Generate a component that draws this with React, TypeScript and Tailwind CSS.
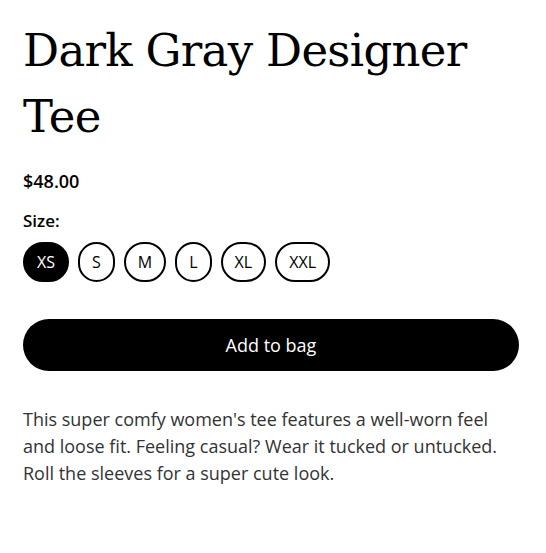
const sizes = ["XS", "S", "M", "L", "XL", "XXL"];

export default function App() {
  const selected = "XS";

  return (
    <div
      className="w-[546px] min-h-[553px] bg-white pl-[23px] pr-[27px] pt-[18px] text-black"
      style={{ fontFamily: '"Open Sans", sans-serif' }}
    >
      <h1 className="font-['DejaVu_Serif',serif] text-[45px] leading-[66px] font-normal tracking-[-0.7px]">
        Dark Gray Designer Tee
      </h1>

      <div className="mt-[19px] text-[18px] leading-[24px] font-semibold">$48.00</div>

      <div className="mt-[16px] text-[17px] leading-[24px] font-semibold">Size:</div>

      {/* Sizes */}
      <div className="mt-[9px] flex gap-[9px]">
        {sizes.map((s) => (
          <button
            key={s}
            className={
              s === selected
                ? "h-[40px] rounded-full border-2 border-black bg-black px-[12px] text-[16px] font-medium text-white"
                : "h-[40px] rounded-full border-2 border-black bg-white px-[12px] text-[16px] font-medium text-black"
            }
          >
            {s}
          </button>
        ))}
      </div>

      <button className="mt-[37px] h-[52px] w-full rounded-[26px] bg-black text-[18px] font-medium text-white">
        Add to bag
      </button>

      <p className="mt-[35px] text-[18px] leading-[27px] text-[#333]">
        This super comfy women's tee features a well-worn feel and loose fit. Feeling casual? Wear it tucked or
        untucked. Roll the sleeves for a super cute look.
      </p>
    </div>
  );
}
